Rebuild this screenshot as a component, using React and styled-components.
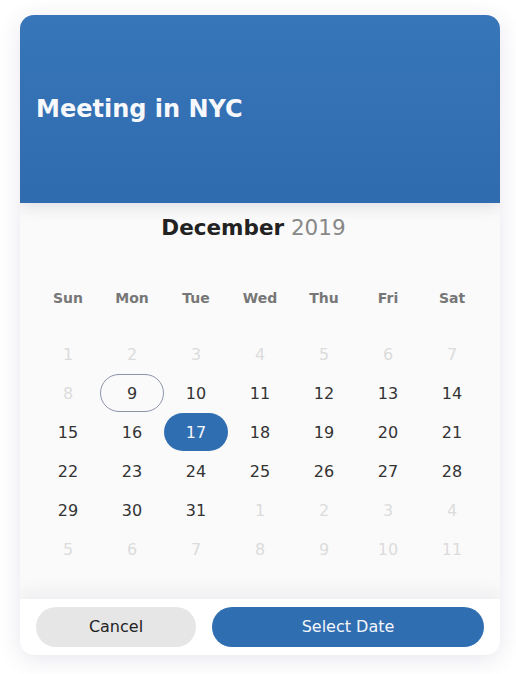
import React, { useState } from "react";
import styled, { createGlobalStyle } from "styled-components";

const GlobalStyle = createGlobalStyle`
  body {
    margin: 0;
    background: #ffffff;
    font-family: "DejaVu Sans", "Liberation Sans", sans-serif;
  }
`;

const weekDays = ["Sun", "Mon", "Tue", "Wed", "Thu", "Fri", "Sat"];

// december 2019 starts on a sunday; first row and trailing days are shown faded
const buildDays = () => {
  const days = [];
  for (let d = 1; d <= 8; d++) days.push({ day: d, muted: true });
  for (let d = 9; d <= 31; d++) days.push({ day: d, muted: false });
  for (let d = 1; d <= 11; d++) days.push({ day: d, muted: true });
  return days;
};

const App = () => {
  const [selected, setSelected] = useState(17);
  const today = 9;
  const days = buildDays();

  return (
    <>
      <GlobalStyle />
      <Page>
        <Card>
          <Header>
            <Title>Meeting in NYC</Title>
          </Header>
          <Body>
            <MonthTitle>
              <strong>December</strong> <span>2019</span>
            </MonthTitle>
            <WeekRow>
              {weekDays.map((w) => (
                <WeekDay key={w}>{w}</WeekDay>
              ))}
            </WeekRow>
            <DayGrid>
              {days.map((d, i) => (
                <DayCell
                  key={i}
                  $muted={d.muted}
                  $today={!d.muted && d.day === today}
                  $selected={!d.muted && d.day === selected}
                  onClick={() => !d.muted && setSelected(d.day)}
                >
                  {d.day}
                </DayCell>
              ))}
            </DayGrid>
          </Body>
          <Footer>
            <CancelButton>Cancel</CancelButton>
            <SelectButton>Select Date</SelectButton>
          </Footer>
        </Card>
      </Page>
    </>
  );
};

export default App;

const Page = styled.div`
  padding: 15px 20px 19px;
`;

const Card = styled.div`
  width: 480px;
  height: 640px;
  border-radius: 14px;
  overflow: hidden;
  display: flex;
  flex-direction: column;
  background: #fafafa;
  box-shadow: 0px 4px 22px rgba(70, 50, 100, 0.13);
`;

const Header = styled.div`
  height: 188px;
  flex-shrink: 0;
  display: flex;
  align-items: center;
  padding: 0 16px;
  background: linear-gradient(180deg, #3776b9 0%, #2f6baf 100%);
  box-shadow: 0px 4px 14px rgba(40, 30, 70, 0.12);
  position: relative;
  z-index: 1;
`;

const Title = styled.h1`
  margin: 0;
  font-size: 24px;
  line-height: 28px;
  font-weight: bold;
  color: #f7f8fc;
`;

const Body = styled.div`
  flex: 1;
  padding: 12px 16px 0;
  background: #fafafa;
`;

const MonthTitle = styled.div`
  text-align: center;
  font-size: 21.5px;
  line-height: 26px;
  padding-right: 13px;
  color: #222;
  strong {
    font-weight: bold;
  }
  span {
    color: #888;
  }
`;

const WeekRow = styled.div`
  display: grid;
  grid-template-columns: repeat(7, 64px);
  margin-top: 47px;
`;

const WeekDay = styled.div`
  text-align: center;
  font-size: 14px;
  line-height: 20px;
  font-weight: bold;
  color: #777;
`;

const DayGrid = styled.div`
  display: grid;
  grid-template-columns: repeat(7, 64px);
  grid-auto-rows: 38px;
  row-gap: 1px;
  margin-top: 27px;
`;

const DayCell = styled.div`
  display: flex;
  align-items: center;
  justify-content: center;
  font-size: 16px;
  border-radius: 19px;
  box-sizing: border-box;
  cursor: ${(p) => (p.$muted ? "default" : "pointer")};
  color: ${(p) => (p.$selected ? "#f4f6fb" : p.$muted ? "#dcdcdc" : "#333")};
  background: ${(p) => (p.$selected ? "#306eb2" : "transparent")};
  border: ${(p) => (p.$today && !p.$selected ? "1px solid #8c95a8" : "none")};
`;

const Footer = styled.div`
  height: 56px;
  flex-shrink: 0;
  display: flex;
  gap: 16px;
  padding: 8px 16px;
  box-sizing: border-box;
  background: #ffffff;
  box-shadow: 0px -6px 18px rgba(60, 40, 90, 0.07);
  position: relative;
`;

const BaseButton = styled.button`
  height: 40px;
  padding: 0 0 2px;
  border: none;
  border-radius: 20px;
  font-family: "DejaVu Sans", "Liberation Sans", sans-serif;
  font-size: 16px;
  cursor: pointer;
`;

const CancelButton = styled(BaseButton)`
  width: 160px;
  background: #e6e6e6;
  color: #222;
`;

const SelectButton = styled(BaseButton)`
  flex: 1;
  background: #306eb2;
  color: #f4f6fb;
`;
